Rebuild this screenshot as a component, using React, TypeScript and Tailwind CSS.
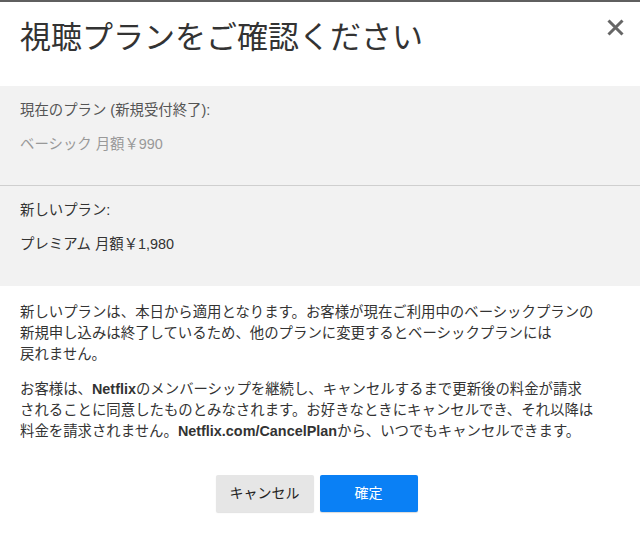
export default function App() {
  const font = { fontFamily: '"Liberation Sans", "Noto Sans CJK JP", sans-serif' };
  return (
    <div className="min-h-[555px] w-[640px] bg-white text-[#333]" style={font}>
      {/* header */}
      <div className="flex h-[86px] items-start justify-between border-t-2 border-[#5f5f5f] pl-5 pr-[16px] pt-[16px]">
        <h1 className="text-[31px] font-normal leading-[40px] text-[#333]">視聴プランをご確認ください</h1>
        <button className="mt-[1px]" aria-label="close">
          <svg width="17" height="17" viewBox="0 0 17 17" className="block">
            <path d="M1.5 1.5 L15.5 15.5 M15.5 1.5 L1.5 15.5" stroke="#666" strokeWidth="3" strokeLinecap="butt" />
          </svg>
        </button>
      </div>

      {/* plans */}
      <div className="bg-[#f2f2f2] text-[14.4px] leading-[21px]">
        <div className="flex flex-col gap-[13px] px-5 pb-[30px] pt-[14px]">
          <div className="text-[#555]">現在のプラン (新規受付終了):</div>
          <div className="text-[#999]">ベーシック 月額￥990</div>
        </div>
        <div className="h-px bg-[#cfcfcf]" />
        <div className="flex flex-col gap-[13px] px-5 pb-[31px] pt-[14px]">
          <div className="text-[#333]">新しいプラン:</div>
          <div className="text-[#333]">プレミアム 月額￥1,980</div>
        </div>
      </div>

      {/* body */}
      <div className="flex flex-col gap-[14px] px-5 pt-[16px] text-[14.4px] leading-[21px] text-[#333]">
        <p>
          新しいプランは、本日から適用となります。お客様が現在ご利用中のベーシックプランの
          <br />
          新規申し込みは終了しているため、他のプランに変更するとベーシックプランには
          <br />
          戻れません。
        </p>
        <p>
          お客様は、<b>Netflix</b>のメンバーシップを継続し、キャンセルするまで更新後の料金が請求
          <br />
          されることに同意したものとみなされます。お好きなときにキャンセルでき、それ以降は
          <br />
          料金を請求されません。<b>Netflix.com/CancelPlan</b>から、いつでもキャンセルできます。
        </p>
      </div>

      {/* actions */}
      <div className="flex justify-center gap-[6px] pr-[7px] pt-[33px]">
        <button className="h-[37px] w-[98px] rounded-[2px] bg-[#e6e6e6] text-[14px] text-[#222] shadow-[0_1px_1px_rgba(0,0,0,0.12)]">
          キャンセル
        </button>
        <button className="h-[37px] w-[98px] rounded-[2px] bg-[#0a80f5] text-[14px] text-white shadow-[0_1px_1px_rgba(0,0,0,0.15)]">
          確定
        </button>
      </div>
    </div>
  );
}
